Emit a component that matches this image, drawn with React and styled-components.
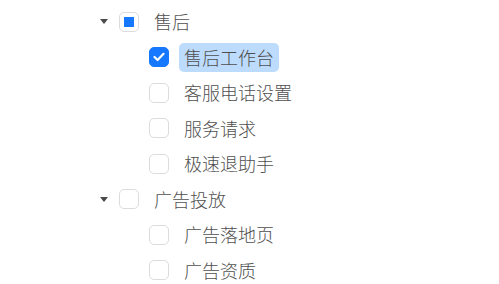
import styled, { createGlobalStyle } from "styled-components";

const GlobalStyle = createGlobalStyle`
  body {
    margin: 0;
    background: #ffffff;
    font-family: "Noto Sans CJK SC", "Noto Sans", sans-serif;
  }
`;

const treeData = [
  {
    title: "售后",
    state: "indeterminate",
    children: [
      { title: "售后工作台", state: "checked", selected: true },
      { title: "客服电话设置" },
      { title: "服务请求" },
      { title: "极速退助手" },
    ],
  },
  {
    title: "广告投放",
    children: [{ title: "广告落地页" }, { title: "广告资质" }],
  },
];

const Tree = styled.div`
  padding: 6.5px 0 0 89px;
  color: #4f4f4f;
  font-size: 18px;
  font-weight: 300;
`;

const Row = styled.div`
  display: flex;
  align-items: center;
  height: 30px;
  padding-bottom: 5.5px;
  padding-left: ${(p) => p.level * 30}px;
`;

const Switcher = styled.span`
  width: 30px;
  height: 30px;
  display: flex;
  align-items: center;
  justify-content: center;
  flex-shrink: 0;
`;

const Box = styled.span`
  position: relative;
  width: 20px;
  height: 20px;
  box-sizing: border-box;
  border-radius: 5px;
  flex-shrink: 0;
  border: 1px solid ${(p) => (p.state === "checked" ? "#1677ff" : "#dcdcdc")};
  background: ${(p) => (p.state === "checked" ? "#1677ff" : "#ffffff")};
  display: flex;
  align-items: center;
  justify-content: center;
`;

const Dot = styled.span`
  width: 10px;
  height: 10px;
  background: #1677ff;
`;

const Title = styled.span`
  margin-left: 10px;
  padding: 0 5px;
  height: 29px;
  line-height: 29px;
  border-radius: 5px;
  white-space: nowrap;
  background: ${(p) => (p.selected ? "#bddcfd" : "transparent")};
`;

const Caret = () => (
  <svg width="8" height="5" viewBox="0 0 8 5">
    <path d="M0 0 L8 0 L4 5 Z" fill="#4a4a4a" />
  </svg>
);

const Check = () => (
  <svg width="12" height="10" viewBox="0 0 12 10">
    <path
      d="M1.5 5 L4.6 8 L10.5 1.8"
      fill="none"
      stroke="#ffffff"
      strokeWidth="2.2"
      strokeLinecap="round"
      strokeLinejoin="round"
    />
  </svg>
);

const Node = ({ node, level, leaf }) => (
  <Row level={level}>
    <Switcher>{leaf ? null : <Caret />}</Switcher>
    <Box state={node.state}>
      {node.state === "checked" && <Check />}
      {node.state === "indeterminate" && <Dot />}
    </Box>
    <Title selected={node.selected}>{node.title}</Title>
  </Row>
);

export default function App() {
  return (
    <>
      <GlobalStyle />
      <Tree>
        {treeData.map((parent) => (
          <div key={parent.title}>
            <Node node={parent} level={0} />
            {parent.children.map((child) => (
              <Node key={child.title} node={child} level={1} leaf />
            ))}
          </div>
        ))}
      </Tree>
    </>
  );
}
